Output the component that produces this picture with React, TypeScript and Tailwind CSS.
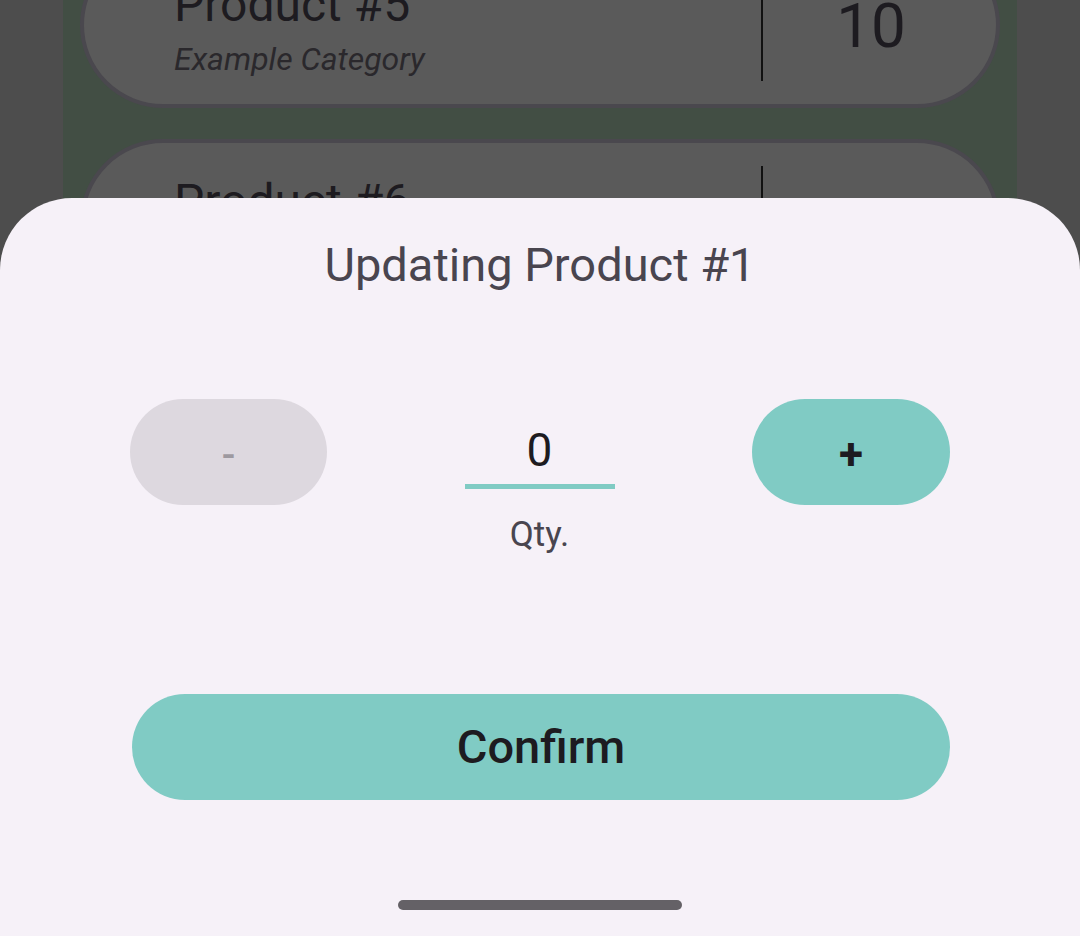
import React, { useState } from 'react';

type Product = { name: string; category: string; qty: number };

const products: Product[] = [
  { name: 'Product #5', category: 'Example Category', qty: 10 },
  { name: 'Product #6', category: 'Example Category', qty: 4 },
  { name: 'Product #7', category: 'Example Category', qty: 2 },
];

function ProductCard({ p }: { p: Product }) {
  return (
    <div className="h-[166px] shrink-0 rounded-full border-4 border-[#4a484e] bg-[#5a5a5a] flex items-center pl-[90px] pr-[17px] pt-[6px]">
      <div className="flex-1 flex flex-col">
        <span className="text-[48px] leading-[54px] text-[#1d1b20]">{p.name}</span>
        <span className="text-[32px] leading-[38px] italic text-[#2a282c] mt-[8px]">{p.category}</span>
      </div>
      <div className="w-[2px] h-[112px] bg-[#111] -mt-[6px]" />
      <div className="w-[216px] text-center text-[62px] text-[#1d1b20] -mt-[6px]">{p.qty}</div>
    </div>
  );
}

export default function App() {
  const [qty, setQty] = useState(0);

  return (
    <div
      className="relative w-[1080px] h-[936px] overflow-hidden bg-[#4d4d4d]"
      style={{ fontFamily: 'Roboto, "Noto Sans", sans-serif' }}
    >
      {/* List behind the scrim */}
      <div className="mx-[63px] h-[1000px] bg-[#424e44] px-[17px] flex flex-col gap-[31px] -mt-[58px]">
        {products.map((p) => (
          <ProductCard key={p.name} p={p} />
        ))}
      </div>

      {/* Bottom sheet */}
      <div className="absolute left-0 right-0 top-[198px] bottom-0 rounded-t-[72px] bg-[#f6f1f8] flex flex-col items-center pt-[41px]">
        <h2 className="text-[47px] leading-[52px] text-[#49454f]">Updating Product #1</h2>

        <div className="w-full mt-[108px] px-[130px] flex items-start justify-between">
          <button
            onClick={() => setQty(Math.max(0, qty - 1))}
            className="w-[197px] h-[106px] rounded-full bg-[#ddd8df] text-[#9d99a0] text-[40px] font-medium flex items-center justify-center pt-[8px]"
          >
            -
          </button>

          <div className="w-[150px] flex flex-col items-center pt-[25px]">
            <span className="text-[46px] leading-[52px] text-[#1d1b20]">{qty}</span>
            <div className="w-full h-[5px] bg-[#80cbc4] mt-[8px]" />
            <span className="text-[35px] leading-[42px] text-[#49454f] mt-[25px]">Qty.</span>
          </div>

          <button
            onClick={() => setQty(qty + 1)}
            className="w-[198px] h-[106px] rounded-full bg-[#80cbc4] text-[#1d1b20] text-[44px] font-bold flex items-center justify-center pt-[4px]"
          >
            +
          </button>
        </div>

        <button className="mt-[138px] ml-[2px] w-[818px] h-[106px] rounded-full bg-[#80cbc4] text-[47px] font-medium text-[#1d1b20] flex items-center justify-center">
          Confirm
        </button>

        <div className="mt-auto mb-[26px] w-[284px] h-[10px] rounded-full bg-[#646166]" />
      </div>
    </div>
  );
}
